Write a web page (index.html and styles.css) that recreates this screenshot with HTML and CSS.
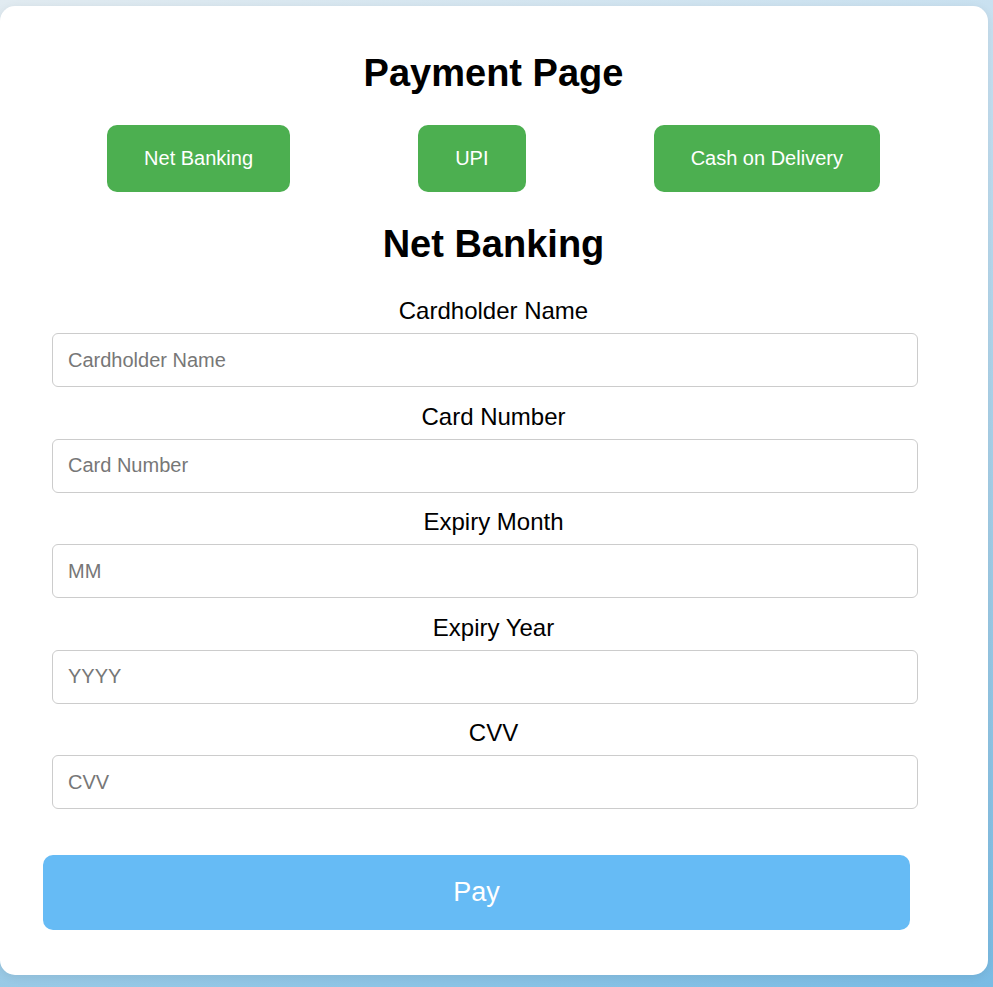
FILE: index.html
```html
<!DOCTYPE html>
<html lang="en">
<head>
<meta charset="utf-8">
<title>Payment Page</title>
<link rel="stylesheet" href="styles.css">
</head>
<body>
<div class="card">
  <h1 class="title">Payment Page</h1>
  <div class="methods">
    <button class="method">Net Banking</button>
    <button class="method">UPI</button>
    <button class="method">Cash on Delivery</button>
  </div>
  <h2 class="title">Net Banking</h2>
  <form class="form">
    <label class="label">Cardholder Name</label>
    <input class="input" type="text" placeholder="Cardholder Name">
    <label class="label">Card Number</label>
    <input class="input" type="text" placeholder="Card Number">
    <label class="label">Expiry Month</label>
    <input class="input" type="text" placeholder="MM">
    <label class="label">Expiry Year</label>
    <input class="input" type="text" placeholder="YYYY">
    <label class="label">CVV</label>
    <input class="input" type="text" placeholder="CVV">
    <button class="pay" type="button">Pay</button>
  </form>
</div>
</body>
</html>
```
FILE: styles.css
```css
html, body {
  height: 100%;
}
body {
  margin: 0;
  font-family: "Liberation Sans", Arial, sans-serif;
  background: linear-gradient(160deg, #e1ebf1 0%, #c2def0 35%, #9dcbe6 70%, #79bbe4 100%);
  overflow: hidden;
}
.card {
  box-sizing: border-box;
  width: 988px;
  margin-top: 6px;
  height: 969px;
  background: #fff;
  border-radius: 15px;
  padding: 45px 44px 0 43px;
  box-shadow: 0 2px 10px rgba(0, 0, 0, 0.08);
}
.title {
  margin: 0;
  text-align: center;
  font-size: 38px;
  line-height: 44px;
  font-weight: bold;
  color: #000;
}
.methods {
  display: flex;
  justify-content: space-around;
  margin: 30px 0 30px;
}
.method {
  background: #4caf50;
  color: #fff;
  border: none;
  border-radius: 10px;
  font-family: "Liberation Sans", Arial, sans-serif;
  font-size: 20px;
  line-height: 23px;
  padding: 22px 37px 22px;
  height: 67px;
}
.form {
  display: flex;
  flex-direction: column;
  margin-top: 31px;
}
.label {
  text-align: center;
  font-size: 24px;
  line-height: 27px;
  color: #000;
  margin-bottom: 9px;
}
.input {
  box-sizing: border-box;
  margin: 0 26px 15.5px 9px;
  height: 54px;
  border: 1px solid #cccccc;
  border-radius: 6px;
  padding: 15px;
  font-family: "Liberation Sans", Arial, sans-serif;
  font-size: 20px;
  line-height: 22px;
  color: #000;
}
.input::placeholder {
  color: #777;
}
.pay {
  margin: 30.5px 34px 0 0;
  height: 75px;
  background: #66bbf5;
  color: #fff;
  border: none;
  border-radius: 10px;
  font-family: "Liberation Sans", Arial, sans-serif;
  font-size: 27px;
}
```
